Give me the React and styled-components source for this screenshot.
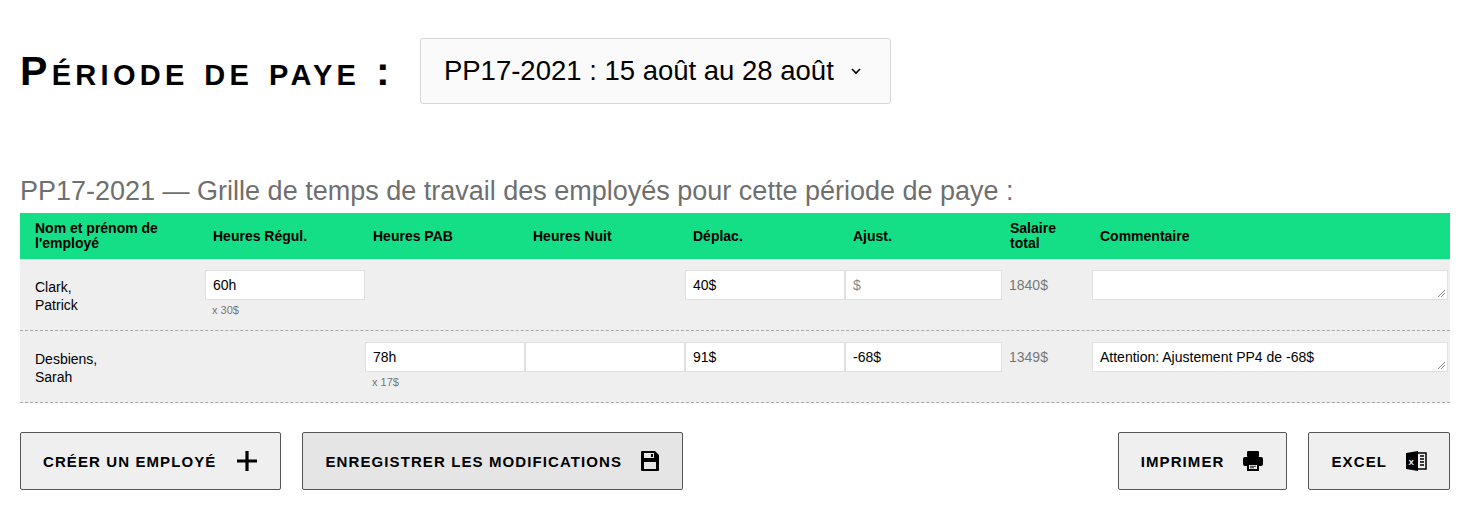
import React from "react";
import styled, { createGlobalStyle } from "styled-components";

const Global = createGlobalStyle`
  body { margin: 0; font-family: "Liberation Sans", Arial, sans-serif; background: #fff; color: #000; }
`;
const Page = styled.div` padding: 38px 21px 0 20px; `;
const TopRow = styled.div` display: flex; align-items: center; gap: 26px; `;
const Title = styled.h1`
  margin: 0; font-size: 41px; font-weight: 700; font-variant: small-caps; letter-spacing: 4.3px; line-height: 1;
`;
const Select = styled.div`
  width: 471px; height: 66px; box-sizing: border-box; border: 1px solid #d6d6d6; border-radius: 3px; background: #fafafa;
  display: flex; align-items: center; padding-left: 23px; gap: 14px; font-size: 27.5px;
`;
const Sub = styled.h2` margin: 72px 0 6px; font-size: 27px; font-weight: 400; color: #6f6f6f; `;
const cols = "185px 160px 160px 160px 160px 157px 90px 1fr";
const Head = styled.div`
  display: grid; grid-template-columns: ${cols}; background: #14df87; height: 46px; align-items: center;
`;
const Th = styled.div` font-size: 14px; font-weight: 700; padding-left: ${p => p.$pl ?? 8}px; line-height: 1.05; `;
const Row = styled.div`
  display: grid; grid-template-columns: ${cols}; background: #efefef; border-bottom: 1px dashed #a8a8a8;
  align-items: start; padding-top: 11px; box-sizing: border-box; height: 72px;
`;
const Name = styled.div` font-size: 14px; padding: 8px 0 0 15px; line-height: 1.3; `;
const Cell = styled.div` display: flex; flex-direction: column; `;
const Input = styled.div`
  height: 30px; box-sizing: border-box; background: #fff; border: 1px solid #e0e0e0; font-size: 14px;
  padding: 6px 0 0 7px; color: ${p => p.$ph ? "#888" : "#000"};
`;
const Rate = styled.div` font-size: 11px; color: #777; padding: 4px 0 0 7px; `;
const Total = styled.div` font-size: 14px; color: #777; padding: 7px 0 0 7px; `;
const Area = styled(Input)` position: relative; margin-right: 2px;
  &::after { content: ""; position: absolute; right: 2px; bottom: 2px; width: 7px; height: 7px;
    background: linear-gradient(135deg, transparent 45%, #888 45%, #888 52%, transparent 52%, transparent 70%, #888 70%, #888 77%, transparent 77%); }
`;
const Bar = styled.div` display: flex; margin-top: 29px; gap: 21px; `;
const Btn = styled.button`
  height: 58px; padding: 0 ${p => p.$pr ?? 22}px 0 22px; border: 1px solid #555; border-radius: 2px;
  background: ${p => p.$active ? "#e5e5e5" : "#efefef"}; font-family: inherit; font-size: 15px; font-weight: 700;
  letter-spacing: 1.1px; display: flex; align-items: center; gap: ${p => p.$gap ?? 18}px; color: #000;
  ${p => p.$push && "margin-left: auto;"}
`;

const Chevron = () => (<svg width="16" height="16" viewBox="0 0 24 24" fill="none" stroke="#000" strokeWidth="2.5"><path d="M6 9l6 6 6-6"/></svg>);
const Plus = () => (<svg width="22" height="22" viewBox="0 0 22 22"><path d="M11 1v20M1 11h20" stroke="#000" strokeWidth="3.2"/></svg>);
const Save = () => (<svg width="20" height="22" viewBox="0 0 20 22"><path d="M2 1h13l4 4v15a1 1 0 0 1-1 1H2a1 1 0 0 1-1-1V2a1 1 0 0 1 1-1z" fill="#000"/><rect x="4" y="3" width="10" height="5" fill="#e5e5e5"/><rect x="11" y="4" width="2" height="3" fill="#000"/><rect x="4" y="12" width="12" height="7" fill="#e5e5e5"/></svg>);
const Printer = () => (<svg width="22" height="22" viewBox="0 0 22 22"><rect x="5" y="1" width="12" height="6" rx="1" fill="#000"/><rect x="1" y="7" width="20" height="9" rx="2" fill="#000"/><path d="M5 13h12v8H5z" fill="#000"/><path d="M7 15h8v4H7z" fill="#efefef"/><path d="M8 16.3h6M8 17.8h4" stroke="#000" strokeWidth=".8"/></svg>);
const Excel = () => (<svg width="22" height="22" viewBox="0 0 22 22"><path d="M1 3l12-2v20L1 19z" fill="#000"/><text x="3.5" y="14.5" fontSize="8" fontWeight="700" fill="#fff" fontFamily="Liberation Sans">X</text><path d="M13 3h8v16h-8" fill="none" stroke="#000" strokeWidth="1.5"/><path d="M15 6h4M15 9h4M15 12h4M15 15h4" stroke="#000" strokeWidth="1.5"/></svg>);

export default function App() {
  return (<Page><Global/>
    <TopRow><Title>Période de paye :</Title><Select>PP17-2021 : 15 août au 28 août <Chevron/></Select></TopRow>
    <Sub>PP17-2021 — Grille de temps de travail des employés pour cette période de paye :</Sub>
    <Head>
      <Th $pl={15}>Nom et prénom de<br/>l'employé</Th><Th>Heures Régul.</Th><Th>Heures PAB</Th><Th>Heures Nuit</Th>
      <Th>Déplac.</Th><Th>Ajust.</Th><Th>Salaire<br/>total</Th><Th>Commentaire</Th>
    </Head>
    <Row>
      <Name>Clark,<br/>Patrick</Name>
      <Cell><Input>60h</Input><Rate>x 30$</Rate></Cell><Cell/><Cell/>
      <Cell><Input>40$</Input></Cell><Cell><Input $ph>$</Input></Cell>
      <Total>1840$</Total><Cell><Area/></Cell>
    </Row>
    <Row>
      <Name>Desbiens,<br/>Sarah</Name>
      <Cell/><Cell><Input>78h</Input><Rate>x 17$</Rate></Cell><Cell><Input/></Cell>
      <Cell><Input>91$</Input></Cell><Cell><Input>-68$</Input></Cell>
      <Total>1349$</Total><Cell><Area>Attention: Ajustement PP4 de -68$</Area></Cell>
    </Row>
    <Bar>
      <Btn $gap={20}>CRÉER UN EMPLOYÉ <Plus/></Btn>
      <Btn $active>ENREGISTRER LES MODIFICATIONS <Save/></Btn>
      <Btn $push>IMPRIMER <Printer/></Btn>
      <Btn>EXCEL <Excel/></Btn>
    </Bar>
  </Page>);
}
